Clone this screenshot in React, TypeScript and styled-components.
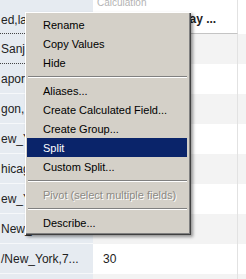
import styled, { createGlobalStyle } from 'styled-components';

const GlobalStyle = createGlobalStyle`
    html, body {
        margin: 0;
        padding: 0;
        background: #ffffff;
        overflow: hidden;
    }
    body {
        font-family: 'Liberation Sans', Arial, sans-serif;
    }
`;

const leftValues = ['Sanju', 'apor', 'gon,', 'ew_Y', 'hicag', 'ew_Y', 'New_', '/New_York,7...', ''];
const rightValues = ['', '', '', '', '', '', '', '30', ''];

interface MenuEntry {
    label?: string;
    separator?: boolean;
    active?: boolean;
    disabled?: boolean;
}

const menuEntries: MenuEntry[] = [
    { label: 'Rename' },
    { label: 'Copy Values' },
    { label: 'Hide' },
    { separator: true },
    { label: 'Aliases...' },
    { label: 'Create Calculated Field...' },
    { label: 'Create Group...' },
    { label: 'Split', active: true },
    { label: 'Custom Split...' },
    { separator: true },
    { label: 'Pivot (select multiple fields)', disabled: true },
    { separator: true },
    { label: 'Describe...' },
];

const App = () => {
    return (
        <Page>
            <GlobalStyle />
            <Grid>
                <HeaderRow>
                    <LeftHeader>ed,lat</LeftHeader>
                    <RightHeader>
                        <TypeLabel>Calculation</TypeLabel>
                        <FieldName>Weekday ...</FieldName>
                    </RightHeader>
                    <EdgeCell />
                </HeaderRow>
                {leftValues.map((value, i) => (
                    <Row key={i}>
                        <LeftCell $dotted={i === 0}>{value}</LeftCell>
                        <RightCell $striped={i % 2 === 0}>{rightValues[i]}</RightCell>
                        <EdgeCell $striped={i % 2 === 0} />
                    </Row>
                ))}
            </Grid>

            <Menu>
                {menuEntries.map((entry, i) =>
                    entry.separator ? (
                        <Separator key={i} />
                    ) : (
                        <MenuItem key={i} $active={entry.active} $disabled={entry.disabled}>
                            {entry.label}
                        </MenuItem>
                    )
                )}
            </Menu>
        </Page>
    );
};

const Page = styled.div`
    position: relative;
    width: 246px;
    height: 279px;
    overflow: hidden;
    background: #ffffff;
`;

const Grid = styled.div`
    display: flex;
    flex-direction: column;
`;

const HeaderRow = styled.div`
    display: grid;
    grid-template-columns: 93px 145px 1fr;
    height: 34px;
`;

const Row = styled.div`
    display: grid;
    grid-template-columns: 93px 145px 1fr;
    height: 30px;
`;

const LeftHeader = styled.div`
    background: #e6ebf1;
    border-bottom: 1px dotted #444444;
    color: #222222;
    font-size: 12px;
    padding: 13px 0 0 1px;
    white-space: nowrap;
    overflow: hidden;
`;

const RightHeader = styled.div`
    display: flex;
    flex-direction: column;
    background: #ffffff;
    border-bottom: 1px solid #c4c4c4;
    border-right: 1px solid #e2e2e2;
    overflow: hidden;
`;

const TypeLabel = styled.span`
    font-size: 10px;
    color: #b4b4b4;
    margin: -3px 0 0 4px;
    line-height: 12px;
`;

const FieldName = styled.span`
    font-size: 12px;
    font-weight: bold;
    color: #222222;
    margin: 4px 0 0 58px;
    line-height: 12px;
    white-space: nowrap;
`;

const LeftCell = styled.div<{ $dotted?: boolean }>`
    display: flex;
    align-items: center;
    background: #e6ebf1;
    border-bottom: 1px ${(p) => (p.$dotted ? 'dotted #444444' : 'solid #f6f8fa')};
    color: #222222;
    font-size: 12px;
    padding-left: 1px;
    white-space: nowrap;
    overflow: hidden;
`;

const RightCell = styled.div<{ $striped?: boolean }>`
    display: flex;
    align-items: center;
    background: ${(p) => (p.$striped ? '#f3f3f3' : '#ffffff')};
    border-right: 1px solid #e2e2e2;
    color: #222222;
    font-size: 12px;
    padding-left: 10px;
`;

const EdgeCell = styled.div<{ $striped?: boolean }>`
    background: ${(p) => (p.$striped ? '#f3f3f3' : '#ffffff')};
`;

const Menu = styled.div`
    position: absolute;
    left: 25px;
    top: 12px;
    width: 166px;
    box-sizing: border-box;
    display: flex;
    flex-direction: column;
    padding: 3px 4px 3px 2px;
    background: #d4d0c8;
    font-family: 'Liberation Sans', Tahoma, Arial, sans-serif;
    font-size: 11px;
    box-shadow:
        inset 1px 1px 0 #ffffff,
        inset -1px -1px 0 #404040,
        inset -2px -2px 0 #808080,
        2px 2px 3px rgba(0, 0, 0, 0.4);
`;

const MenuItem = styled.div<{ $active?: boolean; $disabled?: boolean }>`
    height: 19px;
    display: flex;
    align-items: center;
    padding-left: 16px;
    white-space: nowrap;
    background: ${(p) => (p.$active ? '#0a246a' : 'transparent')};
    color: ${(p) => (p.$active ? '#ffffff' : p.$disabled ? '#8c8a85' : '#000000')};
    text-shadow: ${(p) => (p.$disabled ? '1px 1px 0 #ffffff' : 'none')};
`;

const Separator = styled.div`
    height: 0;
    margin: 4px 0 3px 1px;
    border-top: 1px solid #808080;
    border-bottom: 1px solid #ffffff;
`;

export default App;
